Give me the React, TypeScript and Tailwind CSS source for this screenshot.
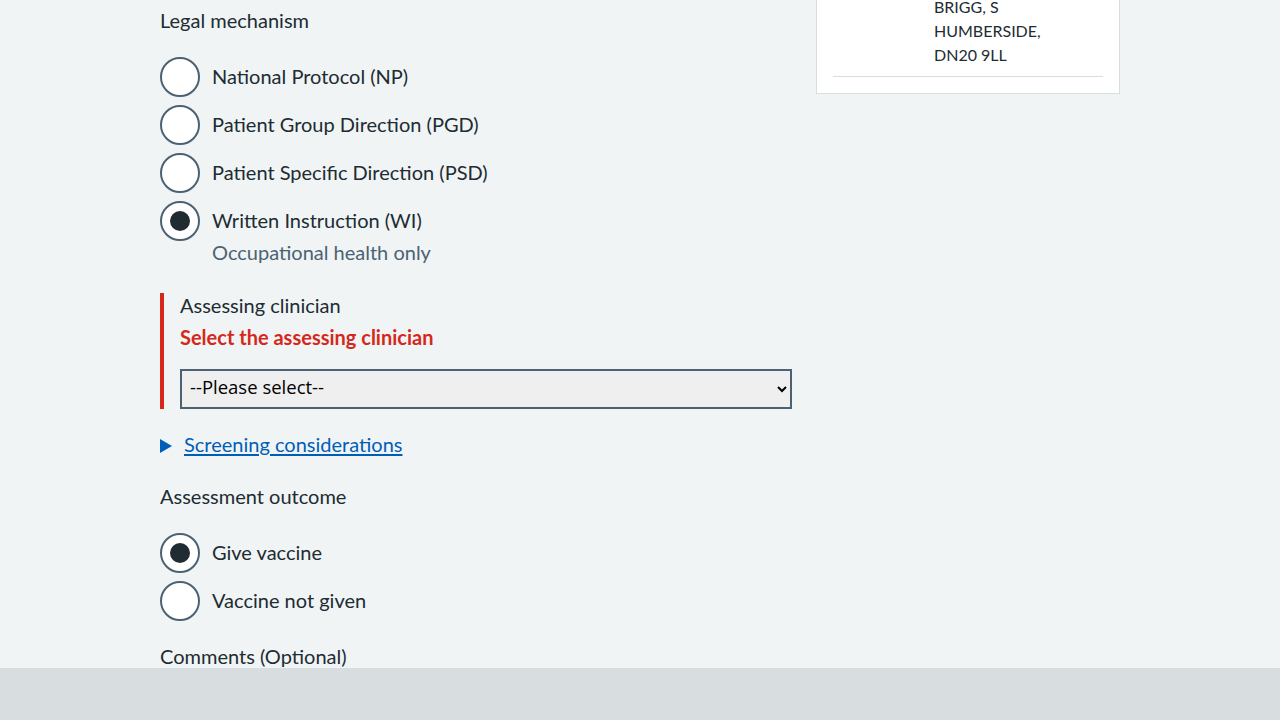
import React, { useState } from 'react';

const font = { fontFamily: 'Lato, "Open Sans", sans-serif' };

interface RadioProps {
  label: string;
  hint?: string;
  checked: boolean;
  onSelect: () => void;
}

const Radio: React.FC<RadioProps> = ({ label, hint, checked, onSelect }) => (
  <div className="flex items-start cursor-pointer" onClick={onSelect}>
    <span className="w-10 h-10 shrink-0 rounded-full border-2 border-[#4c6272] bg-white flex items-center justify-center">
      {checked && <span className="w-5 h-5 rounded-full bg-[#212b32]" />}
    </span>
    <div className="ml-3 pt-[5px]">
      <div className="text-[20px] leading-[28px] text-[#212b32]">{label}</div>
      {hint && <div className="mt-1 text-[20px] leading-[28px] text-[#4c6272]">{hint}</div>}
    </div>
  </div>
);

const App: React.FC = () => {
  const [mechanism, setMechanism] = useState('WI');
  const [outcome, setOutcome] = useState('give');

  const mechanisms = [
    { id: 'NP', label: 'National Protocol (NP)' },
    { id: 'PGD', label: 'Patient Group Direction (PGD)' },
    { id: 'PSD', label: 'Patient Specific Direction (PSD)' },
    { id: 'WI', label: 'Written Instruction (WI)', hint: 'Occupational health only' },
  ];

  return (
    <div className="h-screen flex flex-col bg-[#f0f4f5] text-[#212b32]" style={font}>
      <main className="flex-1 overflow-hidden">
        <div className="w-[960px] mx-auto flex gap-6">
          {/* Left column: form */}
          <div className="w-[632px] pt-[6px]">
            <div className="text-[20px] leading-[28px]">Legal mechanism</div>
            <div className="mt-[23px] flex flex-col gap-2">
              {mechanisms.map(m => (
                <Radio
                  key={m.id}
                  label={m.label}
                  hint={m.hint}
                  checked={mechanism === m.id}
                  onSelect={() => setMechanism(m.id)}
                />
              ))}
            </div>

            {/* Error group */}
            <div className="mt-[28px] border-l-4 border-[#d5281b] pl-4">
              <div className="-mt-px text-[20px] leading-[24px]">Assessing clinician</div>
              <div className="mt-2 text-[20px] leading-[24px] font-bold text-[#d5281b]">
                Select the assessing clinician
              </div>
              <select
                className="mt-[20px] w-full h-10 border-2 border-[#4c6272] bg-[#efefef] pl-1 pr-2 pb-[6px] text-[18.5px] text-black"
                style={{ fontFamily: '"Open Sans", sans-serif' }}
                defaultValue=""
              >
                <option value="">--Please select--</option>
              </select>
            </div>

            {/* Details */}
            <div className="mt-[21px] flex items-center">
              <svg width="12" height="14" viewBox="0 0 12 14" className="shrink-0 mt-[4px]">
                <path d="M0 0 L12 7 L0 14 Z" fill="#005eb8" />
              </svg>
              <a href="#" className="ml-3 text-[20px] leading-[28px] text-[#005eb8] underline underline-offset-2">
                Screening considerations
              </a>
            </div>

            <div className="mt-6 text-[20px] leading-[28px]">Assessment outcome</div>
            <div className="mt-[23px] flex flex-col gap-2">
              <Radio label="Give vaccine" checked={outcome === 'give'} onSelect={() => setOutcome('give')} />
              <Radio label="Vaccine not given" checked={outcome === 'not'} onSelect={() => setOutcome('not')} />
            </div>

            <div className="mt-[21px] text-[20px] leading-[28px]">Comments (Optional)</div>
          </div>

          {/* Right column: patient card */}
          <div className="w-[304px] shrink-0">
            <div className="-mt-[6px] bg-white border border-[#d8dde0] px-4 pb-4">
              <div className="flex border-b border-[#d8dde0] pb-[9px]">
                <div className="w-[101px] shrink-0" />
                <div className="text-[16px] leading-[24px]">
                  <div>BRIGG, S</div>
                  <div>HUMBERSIDE,</div>
                  <div>DN20 9LL</div>
                </div>
              </div>
            </div>
          </div>
        </div>
      </main>
      <footer className="h-[52px] shrink-0 bg-[#d8dde0]" />
    </div>
  );
};

export default App;
